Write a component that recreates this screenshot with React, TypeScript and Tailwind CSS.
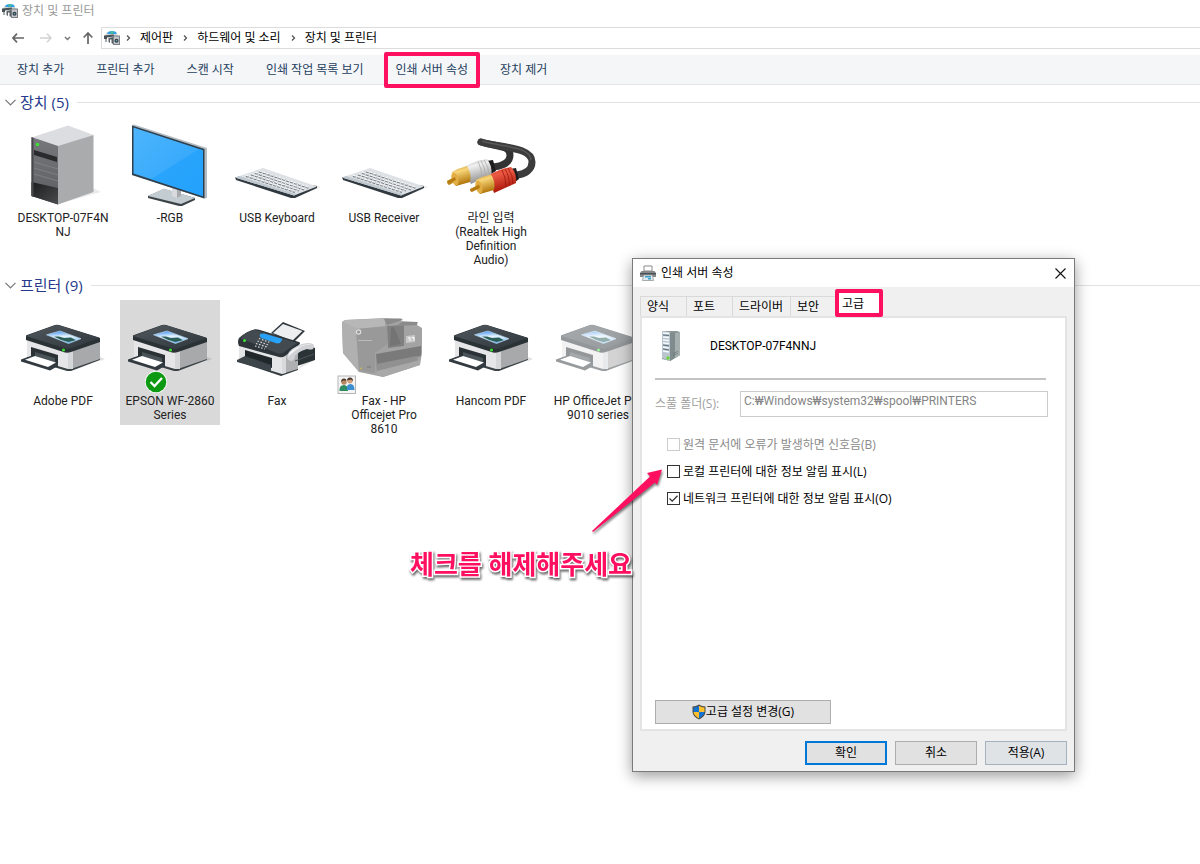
import { useState, type ReactNode } from "react";

const commands = [
  { label: "장치 추가" },
  { label: "프린터 추가" },
  { label: "스캔 시작" },
  { label: "인쇄 작업 목록 보기" },
  { label: "인쇄 서버 속성", marked: true },
  { label: "장치 제거" },
];

const crumbs = ["제어판", "하드웨어 및 소리", "장치 및 프린터"];

const tabs = ["양식", "포트", "드라이버", "보안", "고급"];

function Art({ children, faded }: { children: ReactNode; faded?: boolean }) {
  return (
    <svg viewBox="0 0 100 94" className={faded ? "h-[94px] w-[100px] opacity-50" : "h-[94px] w-[100px]"} aria-hidden="true">
      {children}
    </svg>
  );
}

function TowerArt() {
  return (
    <Art>
      <defs>
        <linearGradient id="towerFront" x1="0" y1="0" x2="0" y2="1">
          <stop offset="0" stopColor="#77787b" />
          <stop offset="1" stopColor="#5c5d60" />
        </linearGradient>
        <linearGradient id="towerBase" x1="0" y1="0" x2="1" y2="1">
          <stop offset="0" stopColor="#1c1d1e" />
          <stop offset="1" stopColor="#4a4b4d" />
        </linearGradient>
      </defs>
      <path d="M45 87L88 75L80 71Z" fill="#000" opacity=".08" />
      <path d="M18.500 20.500L55 8.500L80.500 18L45 30Z" fill="#dcdde0" />
      <path d="M45 29L80.500 18V75L45 87.500Z" fill="#aaabad" />
      <path d="M18.500 20L45 29V87.500L18.500 79Z" fill="url(#towerFront)" />
      <path d="M21 33L44 40V45L21 38Z" fill="#2a2b2c" />
      <path d="M21 45L45 52M21 51L45 58M21 57L45 64" stroke="#8d8e91" strokeWidth=".6" />
      <path d="M18.500 65L45 71V87.500L18.500 79Z" fill="url(#towerBase)" />
      <path d="M18.500 20V79L20.500 80V21Z" fill="#47484a" />
      <circle cx="24.500" cy="27.500" r="1.700" fill="#38e62c" />
    </Art>
  );
}

function MonitorArt() {
  return (
    <Art>
      <defs>
        <linearGradient id="monitorScreen" x1="0" y1="0" x2="1" y2="1">
          <stop offset="0" stopColor="#4db5fc" />
          <stop offset="1" stopColor="#2ba3fc" />
        </linearGradient>
      </defs>
      <path d="M28 79L44 72L75 81V83L62 89H59L28 81Z" fill="#3b4347" />
      <path d="M28 79L44 71.500L75 81L61 87Z" fill="#c3ccd1" />
      <path d="M52 69L61 71V79L57 81L52 79Z" fill="#d9dadd" />
      <path d="M57 71L61 71V79L57 81Z" fill="#a7aaad" />
      <path d="M12 8L14 7.500L87 31V81L84 81.500L12 58Z" fill="#b5bdc3" />
      <path d="M12 8.500L84.500 32V81.500L12 58Z" fill="#2e3f4d" />
      <path d="M13.500 10.500L83 33.200V79.300L13.500 56.500Z" fill="url(#monitorScreen)" />
      <path d="M31 62.200L79 31.900L83 33.200V79.300Z" fill="#1ea0fb" opacity=".6" />
    </Art>
  );
}

function KeyboardArt() {
  return (
    <Art>
      <path d="M66 82L94 70L88 68Z" fill="#000" opacity=".08" />
      <path d="M8 60L9 63L64 81H68L90 71V69Z" fill="#30393f" />
      <path d="M8 60.500L36 51L90 69.500L67 78.500Z" fill="#dde1e5" />
      <path d="M8 60.500L12 59L70 77.500L67 78.500Z" fill="#bfc8ce" />
      <path
        d="M32 54.500L82 71M28 56L77 72.500M24 57.500L72 73.500M19 59L68 75"
        stroke="#798087"
        strokeWidth="1.900"
        strokeDasharray="2.900 1.200"
      />
      <path d="M32 53.700L82 70.200M28 55.200L77 71.700M24 56.700L72 72.700M19 58.200L68 74.200" stroke="#f6f7f8" strokeWidth="1.300" strokeDasharray="2.900 1.200" />
    </Art>
  );
}

function CableArt() {
  return (
    <Art>
      <defs>
        <linearGradient id="plugGold" x1="0" y1="0" x2=".3" y2="1">
          <stop offset="0" stopColor="#c78d20" />
          <stop offset=".35" stopColor="#f8d679" />
          <stop offset="1" stopColor="#b07408" />
        </linearGradient>
        <linearGradient id="plugSilver" x1="0" y1="0" x2=".3" y2="1">
          <stop offset="0" stopColor="#b8b8b8" />
          <stop offset=".35" stopColor="#f0f0f0" />
          <stop offset="1" stopColor="#8f8f8f" />
        </linearGradient>
        <linearGradient id="plugRed" x1="0" y1="0" x2=".3" y2="1">
          <stop offset="0" stopColor="#d03526" />
          <stop offset=".35" stopColor="#ec5a43" />
          <stop offset="1" stopColor="#a81408" />
        </linearGradient>
      </defs>
      <path d="M40 25C55 30 69 28 69 38C69 46 61 49 52 50" fill="none" stroke="#333" strokeWidth="7" strokeLinecap="round" />
      <path d="M40 25C60 31 91 30 91 45C91 53 84 57 76 58" fill="none" stroke="#3c3c3c" strokeWidth="7" strokeLinecap="round" />
      <path d="M41 24C60 30 89 29 90 43" fill="none" stroke="#585858" strokeWidth="1.500" />
      <path d="M45 44L52 43L55 54L50 57Z" fill="#1d1d1d" />
      <path d="M69 52L75 51L78 62L74 65Z" fill="#1d1d1d" />
      <path d="M23 50Q33 44 46 42Q51 48 50.500 57L30 67Q25 59 23 50Z" fill="url(#plugSilver)" />
      <path d="M37 44.500Q41 52 41 61M40 43.500Q44.500 51 44.500 59.500M43 43Q48 50 48 58" stroke="#aaa" strokeWidth=".8" fill="none" />
      <path d="M6 64L15 59L16 64L8 68Q6 67 6 64Z" fill="url(#plugGold)" />
      <path d="M11 55Q18 51 26 49Q31 57 29 65L15 69Q9 63 11 55Z" fill="url(#plugGold)" />
      <ellipse cx="14" cy="62" rx="3.300" ry="6.500" transform="rotate(-14 14 62)" fill="#e2ae43" />
      <path d="M6 64L14 60L15 63L7 67Z" fill="#b77c10" />
      <path d="M47 59Q57 52 70 50Q76 56 75 66L53 76Q50 67 47 59Z" fill="url(#plugRed)" />
      <path d="M61 53Q65 60 65 70M64 52Q68.500 59 68.500 68.500M67 51Q72 58 72 67" stroke="#96160c" strokeWidth=".8" fill="none" />
      <path d="M35 63Q42 59 50 57.500Q55 65 53 73L39 77Q33 71 35 63Z" fill="url(#plugGold)" />
      <ellipse cx="38" cy="70" rx="3.300" ry="6.500" transform="rotate(-14 38 70)" fill="#e2ae43" />
      <path d="M29 72L38 67.500L39 71L31 75Q29 75 29 72Z" fill="#b77c10" />
    </Art>
  );
}

function PrinterArt({ faded, ready }: { faded?: boolean; ready?: boolean }) {
  return (
    <Art faded={faded}>
      <defs>
        <linearGradient id="printerTop" x1="0" y1="0" x2="1" y2="1">
          <stop offset="0" stopColor="#50585d" />
          <stop offset="1" stopColor="#2f373c" />
        </linearGradient>
        <linearGradient id="printerPhoto" x1=".3" y1="0" x2=".5" y2="1">
          <stop offset="0" stopColor="#3f92f2" />
          <stop offset=".45" stopColor="#e6f3fd" />
          <stop offset=".7" stopColor="#b9dcf8" />
          <stop offset="1" stopColor="#67b4f3" />
        </linearGradient>
      </defs>
      <path d="M87 61L92 59L87 57Z" fill="#000" opacity=".12" />
      <path d="M14 39V59L54 71H58L87 60V42L55 52Z" fill="#3a4246" />
      <path d="M14 39V57L55 69V50Z" fill="#e6e6e8" />
      <path d="M55 51L87 41V59L58 69H55Z" fill="#a8a9ab" />
      <path d="M55 51L60 50V69H55Z" fill="#d5d6d8" />
      <path d="M18 47L45 55V67L18 58Z" fill="#2b3236" />
      <path d="M22 52L42 58V64L22 57Z" fill="#4a5358" />
      <path d="M8 59.500L19 55.500L45 63V66L37 70.500L8 61.500Z" fill="#333b40" />
      <path d="M12 59.700L22 56L43 62.500L35 67Z" fill="#fff" />
      <path d="M13 36Q12.500 35.500 14 35L42 25Q44 24.500 46 25L86 37.500Q87.500 38 87 39V42L58 52Q55 53 52 52.500L13 40Z" fill="#2a3236" />
      <path d="M13 36L42 25.300Q44 24.800 46 25.300L86.500 38L57 48.500Q55 49 53 48.500Z" fill="url(#printerTop)" />
      <path d="M33.500 34.800L47 31L68 38.700L55.500 43.500Z" fill="url(#printerPhoto)" />
      <path d="M41 36.500L46 36.500L51 38L58 37.500L63 40.300L55.500 42L48 40Z" fill="#2c5f57" />
      <path d="M33.500 34.800L47 31L68 38.700L55.500 43.500Z" fill="none" stroke="#b5d2ec" strokeWidth=".7" />
      <circle cx="50.500" cy="50" r="1.500" fill="#39e52e" />
      {ready && (
        <>
          <circle cx="36" cy="82" r="11" fill="#fff" />
          <circle cx="36" cy="82" r="10.300" fill="#0d9a12" />
          <path d="M30.500 82L34.500 86L42 78" fill="none" stroke="#fff" strokeWidth="2.300" />
        </>
      )}
    </Art>
  );
}

function FaxArt() {
  return (
    <Art>
      <path d="M71 69L88 60L80 58Z" fill="#000" opacity=".1" />
      <path d="M62 62L66 55L83 46L88 48V60L67 67Z" fill="#2b3337" />
      <path d="M44 33L56 22L78 31L66 43Z" fill="#30383d" />
      <path d="M46 33L56 24L75.500 31L65 41Z" fill="#eceeef" />
      <path d="M12 44V62L54 76L71 70V47Z" fill="#343c40" />
      <path d="M12 44V61L55 74V56Z" fill="#e4e5e7" />
      <path d="M55 56L71 49V69L55 74Z" fill="#aeb0b2" />
      <path d="M55 57L59 55V73L55 74Z" fill="#d8d9db" />
      <path d="M18 50L45 58V68L18 60Z" fill="#20272a" />
      <path d="M10 60L18 56L44 65V71L10 62Z" fill="#3c454a" />
      <path d="M12 38Q20 31 28 29.300Q30 29 33 30L72 42Q74 43 72 45L58 56Q55 58 52 57L12 46Q10 42 12 38Z" fill="#2d353a" />
      <path d="M13 38Q21 31 28 29.700L70 43L56 53Q54 54 51 53.500Z" fill="#434b50" />
      <path d="M33 34L37 33.500L54 38.500Q56 39 55 40L53 43L50 43.500L34 38Q32 36 33 34Z" fill="#29a1f5" />
      <path d="M32 38.500L43 42.500M30.500 41L41.500 45M29 43.500L40 47M28 46L38 49" stroke="#d6dadd" strokeWidth="1.200" strokeDasharray="1.500 1.700" />
      <circle cx="17.500" cy="40.500" r="1.500" fill="#39e52e" />
      <path d="M60 58Q60 51 70 46Q80 41 86 44Q88 46 86 49Q84 50 80 49Q72 51 68 56Q68 60 65 61Q61 61 60 58Z" fill="#cfd1d4" />
      <path d="M61 57Q62 51 71 47Q80 43 85 45Q76 44 69 50Q64 54 61 57Z" fill="#f5f5f6" />
      <path d="M68 61L87 54" stroke="#4a5357" strokeWidth="1" />
    </Art>
  );
}

function OfficejetArt() {
  return (
    <Art>
      <path d="M8 22L11 20L51 18L68 19L66 21L84 22L83 25L88 28V53L86 65L49 77L25 72L9 53Z" fill="#a3a3a3" />
      <path d="M8 22L11 20L51 18.500V27L22 29Z" fill="#b7b7b7" />
      <path d="M8 22L22 28L25 72L9 53Z" fill="#b0b0b0" />
      <path d="M22 29L53 26V44L41 53V73L25 71Z" fill="#999" />
      <path d="M53 26L70 25V46L54 48Z" fill="#808080" />
      <path d="M50 19L67 18.500L69 20L53 25ZM68 22L83 22V25L62 26Z" fill="#8b8b8b" />
      <path d="M57 28L60 27L67 44L56 46Z" fill="#747474" />
      <path d="M42 54L87 46V56L43 66Z" fill="#7a7a7a" />
      <path d="M42 64L83 56L84 61L43 72Z" fill="#919191" />
      <path d="M43 71L86 60V65L49 77L43 75Z" fill="#a8a8a8" />
      <path d="M72 36L81 35V42L72 43Z" fill="#c8c8c8" />
      <path d="M74 38L76 37.700V41M78 37.500H80V40.500" stroke="#fff" strokeWidth="1" fill="none" />
      <circle cx="24.500" cy="32" r="2.200" fill="none" stroke="#dedede" strokeWidth="1.200" />
      <path d="M24 40.500H38" stroke="#bbb" strokeWidth="1" />
      <circle cx="27" cy="68.500" r=".9" fill="#c9b64f" />
      <path d="M33 67H37" stroke="#777" strokeWidth="1" />
      <rect x="4" y="76" width="17.500" height="17.500" fill="#f4f4f4" stroke="#b5b5b5" />
      <path d="M5.500 91Q5 85 10 85Q14 85 14 91Z" fill="#2e8b62" />
      <path d="M13 90Q12 84 16.500 84Q20.500 84 20.500 90Z" fill="#3b8fd0" />
      <circle cx="10" cy="82" r="2.700" fill="#b98662" />
      <circle cx="16" cy="80.800" r="2.700" fill="#d3a07c" />
      <path d="M7 82Q7 78.500 10 78.500Q12.500 78.500 12.500 80.500L9 80.500ZM13.200 80.500Q13 77.500 16 77.500Q19 77.500 19 81L17 79.500Z" fill="#4a3828" />
    </Art>
  );
}

function DevicesIcon() {
  return (
    <svg viewBox="0 0 16 16" className="size-4 shrink-0" aria-hidden="true">
      <path d="M1 6L3 2H12L14 6Z" fill="#cfd6da" />
      <path d="M3.500 3Q4 1 8 1Q12 1 12.500 3V4H3.500Z" fill="#2f9fe8" />
      <path d="M6.500 1.300H9.500V3.500H6.500Z" fill="#4fc08a" />
      <path d="M0 5.500L10 4.500V6.500L3 7.500V9H0Z" fill="#4a5155" />
      <path d="M1 9H3V12H1Z" fill="#a4abaf" />
      <path d="M4.500 8L9 7V14L7.500 13V9.500H6V13L4.500 12Z" fill="#5a6166" />
      <rect x="9.500" y="6" width="6" height="8.500" fill="#c0c6c9" stroke="#7b8185" />
      <circle cx="12.500" cy="10.800" r="2" fill="#363c40" />
      <circle cx="12.500" cy="10.800" r=".8" fill="#59b8d8" />
    </svg>
  );
}

function DialogPrinterIcon() {
  return (
    <svg viewBox="0 0 16 16" className="size-4 shrink-0" aria-hidden="true">
      <path d="M4 1H12V6H4Z" fill="#fff" stroke="#8a8a8a" />
      <path d="M1.500 6H14.500L16 8V12H0V8Z" fill="#85898c" />
      <path d="M0 8H16V9.500H0Z" fill="#4b5154" />
      <path d="M3.500 10H12.500L13.500 15.500H2.500Z" fill="#dfe9ef" stroke="#85898b" strokeWidth=".7" />
      <path d="M5 11H11V12.500H5ZM8 13H11V14.500H8Z" fill="#3a9fc4" />
    </svg>
  );
}

function ServerIcon() {
  return (
    <svg viewBox="0 0 22 32" className="h-8 w-[22px]" aria-hidden="true">
      <path d="M1 1H16L19 2V25L9 31L1 29Z" fill="#8b9698" />
      <path d="M9 3L19 2V25L9 31Z" fill="#7f8b8c" />
      <path d="M14 3L19 2V25L14 28Z" fill="#a5afaf" />
      <path d="M1 1L9 2V31L1 28Z" fill="#b9c6cf" />
      <path d="M2 3L8 3.500M2 7L8 7.500M2 10L8 10.500M2 13L8 13.500M2 17L8 18M2 21L8 22" stroke="#f5fafc" strokeWidth="1.500" />
      <path d="M2 5L8 5.500M2 15L8 16M2 19L8 20" stroke="#5b6d7b" strokeWidth="1" />
      <path d="M12 24L17 21M12 26L17 23" stroke="#69777a" strokeWidth=".8" />
      <circle cx="7" cy="28" r="1.700" fill="#6bd636" />
    </svg>
  );
}

function ShieldIcon() {
  return (
    <svg viewBox="0 0 14 16" className="h-4 w-3.5 shrink-0" aria-hidden="true">
      <path d="M7 .5Q10 2.500 13.500 2.500V8Q13 13 7 15.500Q1 13 .5 8V2.500Q4 2.500 7 .5Z" fill="#4b4a43" />
      <path d="M7 1.700V8H1.500V3.500Q4.500 3.300 7 1.700Z" fill="#1373d1" />
      <path d="M7 1.700V8H12.500V3.500Q9.500 3.300 7 1.700Z" fill="#fcbf2d" />
      <path d="M1.500 8H7V14.400Q2 12 1.500 8Z" fill="#fcbf2d" />
      <path d="M12.500 8H7V14.400Q12 12 12.500 8Z" fill="#1373d1" />
    </svg>
  );
}

function Chevron() {
  return (
    <svg viewBox="0 0 5 8" className="h-2 w-[5px]" fill="none" stroke="#555" strokeWidth="1.300" aria-hidden="true">
      <path d="M1 1.500L3.500 4L1 6.500" />
    </svg>
  );
}

interface Item {
  lines: string;
  art: ReactNode;
  selected?: boolean;
}

// names carry their own line breaks, the shell also splits inside a word
const devices: Item[] = [
  { lines: "DESKTOP-07F4N\nNJ", art: <TowerArt /> },
  { lines: "-RGB", art: <MonitorArt /> },
  { lines: "USB Keyboard", art: <KeyboardArt /> },
  { lines: "USB Receiver", art: <KeyboardArt /> },
  { lines: "라인 입력\n(Realtek High\nDefinition\nAudio)", art: <CableArt /> },
];

const printers: Item[] = [
  { lines: "Adobe PDF", art: <PrinterArt /> },
  { lines: "EPSON WF-2860\nSeries", art: <PrinterArt ready />, selected: true },
  { lines: "Fax", art: <FaxArt /> },
  { lines: "Fax - HP\nOfficejet Pro\n8610", art: <OfficejetArt /> },
  { lines: "Hancom PDF", art: <PrinterArt /> },
  { lines: "HP OfficeJet Pro\n9010 series", art: <PrinterArt faded /> },
];

function Group({ title, items }: { title: string; items: Item[] }) {
  return (
    <section className="pb-[3px]">
      <div className="flex h-6 items-center gap-1 pl-[5px]">
        <svg viewBox="0 0 11 7" className="h-[7px] w-[11px]" fill="none" stroke="#777" strokeWidth="1.200" aria-hidden="true">
          <path d="M.5 .8L5.500 5.800L10.500 .8" />
        </svg>
        <h2 className="text-[15px] text-[#26398c]">{title}</h2>
        <div className="ml-1 h-px flex-1 bg-[#e2e2e2]" />
      </div>
      <ul className="mt-[3px] flex items-start gap-[7px] pl-[13px]">
        {items.map((item) => (
          <li key={item.lines} className={item.selected ? "w-[100px] shrink-0 bg-[#d9d9d9] pb-[3px]" : "w-[100px] shrink-0 pb-[3px]"}>
            {item.art}
            <p className="text-center font-['Roboto','Noto_Sans_CJK_KR',sans-serif] leading-[14px] whitespace-pre text-[#222]">{item.lines}</p>
          </li>
        ))}
      </ul>
    </section>
  );
}

function CheckRow({ id, label, defaultChecked, disabled }: { id: string; label: string; defaultChecked?: boolean; disabled?: boolean }) {
  return (
    <div className="flex h-[27px] items-center gap-[3px]">
      <span className="relative flex">
        <input
          id={id}
          type="checkbox"
          defaultChecked={defaultChecked}
          disabled={disabled}
          className="peer size-[13px] appearance-none border border-[#333] bg-white disabled:border-[#ccc]"
        />
        <svg viewBox="0 0 13 13" className="pointer-events-none absolute inset-0 hidden size-[13px] peer-checked:block" fill="none" stroke="#333" strokeWidth="1.300" aria-hidden="true">
          <path d="M2.500 6.500L5.200 9.200L10.500 3.800" />
        </svg>
      </span>
      <label htmlFor={id} className={disabled ? "text-[#8a8a8a]" : "text-black"}>
        {label}
      </label>
    </div>
  );
}

function ServerDialog() {
  const [tab, setTab] = useState("고급");

  return (
    <div role="dialog" aria-label="인쇄 서버 속성" className="absolute top-[258px] left-[632px] w-[443px] border border-[#7a7a7a] bg-[#f0f0f0] shadow-[0_4px_14px_rgba(0,0,0,0.4)]">
      <div className="flex h-7 items-center gap-[5px] bg-white pr-1.5 pl-[7px]">
        <DialogPrinterIcon />
        <span className="flex-1 text-black">인쇄 서버 속성</span>
        <button type="button" aria-label="닫기" className="p-0.5">
          <svg viewBox="0 0 11 11" className="size-[11px]" stroke="#111" strokeWidth="1.100" aria-hidden="true">
            <path d="M.5 .5L10.500 10.500M10.500 .5L.5 10.500" />
          </svg>
        </button>
      </div>

      <div className="px-[7px] pt-1 pb-1.5">
        <div role="tablist" className="flex h-[25px] items-end">
          {tabs.map((name) =>
            name === tab ? (
              <button key={name} type="button" role="tab" aria-selected className="relative h-[25px] w-[46px] bg-white pl-1.5 text-left">
                {name}
                <span className="absolute -inset-x-px -top-0.5 -bottom-px rounded-xs border-4 border-[#ff0f5f]" />
              </button>
            ) : (
              <button
                key={name}
                type="button"
                role="tab"
                aria-selected={false}
                onClick={() => setTab(name)}
                className={
                  name === "드라이버"
                    ? "h-5 w-[58px] border-t border-l border-[#d9d9d9] pl-1.5 text-left whitespace-nowrap"
                    : "h-5 w-[46px] border-t border-l border-[#d9d9d9] pl-1.5 text-left"
                }
              >
                {name}
              </button>
            ),
          )}
        </div>

        <div className="flex h-[415px] flex-col border-2 border-[#e4e4e4] bg-white pt-3 pr-[17px] pb-[5px] pl-[13px]">
          <div className="mr-0.5 flex h-[50px] items-start gap-[27px] border-b-2 border-[#c4c4c4] pl-1.5">
            <ServerIcon />
            <span className="font-['Roboto','Noto_Sans_CJK_KR',sans-serif] leading-8 text-black">DESKTOP-07F4NNJ</span>
          </div>
          <div className="mt-[11px] flex items-center">
            <label htmlFor="spool" className="w-[85px] text-[#a0a0a0]">
              스풀 폴더(S):
            </label>
            <input
              id="spool"
              readOnly
              value="C:₩Windows₩system32₩spool₩PRINTERS"
              className="h-[26px] min-w-0 flex-1 border border-[#ccc] pr-1 pb-1.5 pl-[3px] font-['Roboto','Noto_Sans_CJK_KR',sans-serif] text-[#858585] outline-none"
            />
          </div>
          <div className="mt-[14px] ml-3 flex flex-col">
            <CheckRow id="beep" label="원격 문서에 오류가 발생하면 신호음(B)" disabled />
            <CheckRow id="local" label="로컬 프린터에 대한 정보 알림 표시(L)" />
            <CheckRow id="network" label="네트워크 프린터에 대한 정보 알림 표시(O)" defaultChecked />
          </div>
          <button type="button" className="mt-auto flex h-6 w-[176px] items-center justify-center border border-[#adadad] bg-[#e1e1e1] text-black">
            <ShieldIcon />
            고급 설정 변경(G)
          </button>
        </div>

        <div className="mt-[10px] flex justify-end gap-2">
          <button type="button" className="h-6 w-[82px] border-2 border-[#0078d7] bg-[#e1e1e1] text-black">
            확인
          </button>
          <button type="button" className="h-6 w-[82px] border border-[#adadad] bg-[#e1e1e1] text-black">
            취소
          </button>
          <button type="button" className="h-6 w-[82px] border border-[#a3b2be] bg-[#dfe3e6] text-black">
            적용(A)
          </button>
        </div>
      </div>
    </div>
  );
}

export default function App() {
  return (
    <div className="relative min-h-screen overflow-hidden bg-white font-['Open_Sans','Noto_Sans_CJK_KR',sans-serif] text-[12px] leading-4">
      <header>
        <div className="flex h-[22px] items-center gap-1 pl-0.5 text-[#999]">
          <DevicesIcon />
          <h1>장치 및 프린터</h1>
        </div>
        <div className="mt-[5px] flex h-[22px] items-center">
          <nav className="flex items-center gap-3 pl-3" aria-label="탐색">
            <button type="button" aria-label="뒤로">
              <svg viewBox="0 0 12 10" className="h-2.5 w-3" fill="none" stroke="#666" strokeWidth="1.700">
                <path d="M5 .7L1 5L5 9.300M1 5H12" />
              </svg>
            </button>
            <button type="button" aria-label="앞으로" className="ml-1">
              <svg viewBox="0 0 12 10" className="h-2.5 w-3" fill="none" stroke="#d2d2d2" strokeWidth="1.500">
                <path d="M7 .7L11 5L7 9.300M11 5H0" />
              </svg>
            </button>
            <button type="button" aria-label="최근 위치">
              <svg viewBox="0 0 7 5" className="h-[5px] w-[7px]" fill="none" stroke="#777" strokeWidth="1.500">
                <path d="M1 1L3.500 3.500L6 1" />
              </svg>
            </button>
            <button type="button" aria-label="위로">
              <svg viewBox="0 0 10 12" className="h-3 w-2.5" fill="none" stroke="#666" strokeWidth="1.700">
                <path d="M.7 5.500L5 1L9.300 5.500M5 1V12" />
              </svg>
            </button>
          </nav>
          <div className="ml-2 flex h-[22px] flex-1 items-center gap-1.5 border border-r-0 border-[#dcdcdc] pl-0.5 text-black">
            <DevicesIcon />
            <div className="flex items-center gap-[10px]">
              {crumbs.map((crumb) => (
                <span key={crumb} className="flex items-center gap-[9px]">
                  <Chevron />
                  <a href="#">{crumb}</a>
                </span>
              ))}
            </div>
          </div>
        </div>
        <div className="mt-1.5 flex h-[30px] items-center gap-8 border-b border-[#e3e6ea] bg-[#f4f6f8] pl-[17px] text-[#26415f]">
          {commands.map((command) => (
            <button key={command.label} type="button" className="relative">
              {command.label}
              {command.marked && <span className="absolute -inset-x-3 -inset-y-[10px] rounded-xs border-4 border-[#ff0f5f]" />}
            </button>
          ))}
        </div>
      </header>

      <main className="pt-[5px]">
        <Group title="장치 (5)" items={devices} />
        <Group title="프린터 (9)" items={printers} />
      </main>

      <ServerDialog />

      <svg viewBox="0 0 80 70" className="absolute top-[466px] left-[588px] h-[70px] w-20 drop-shadow-[1px_2px_1px_rgba(0,0,0,0.5)]" aria-hidden="true">
        <path d="M74 3.500L59 7L62 10.500L4 65L5 66L67 16.500L69 19Z" fill="#ff0f5f" />
      </svg>
      <p className="absolute top-[548px] left-[410px] text-[26px] leading-8 font-bold whitespace-nowrap text-[#ff0f5f] drop-shadow-[1px_2px_1px_rgba(0,0,0,0.6)] [-webkit-text-stroke:3px_white] [paint-order:stroke]">
        체크를 해제해주세요
      </p>
    </div>
  );
}
